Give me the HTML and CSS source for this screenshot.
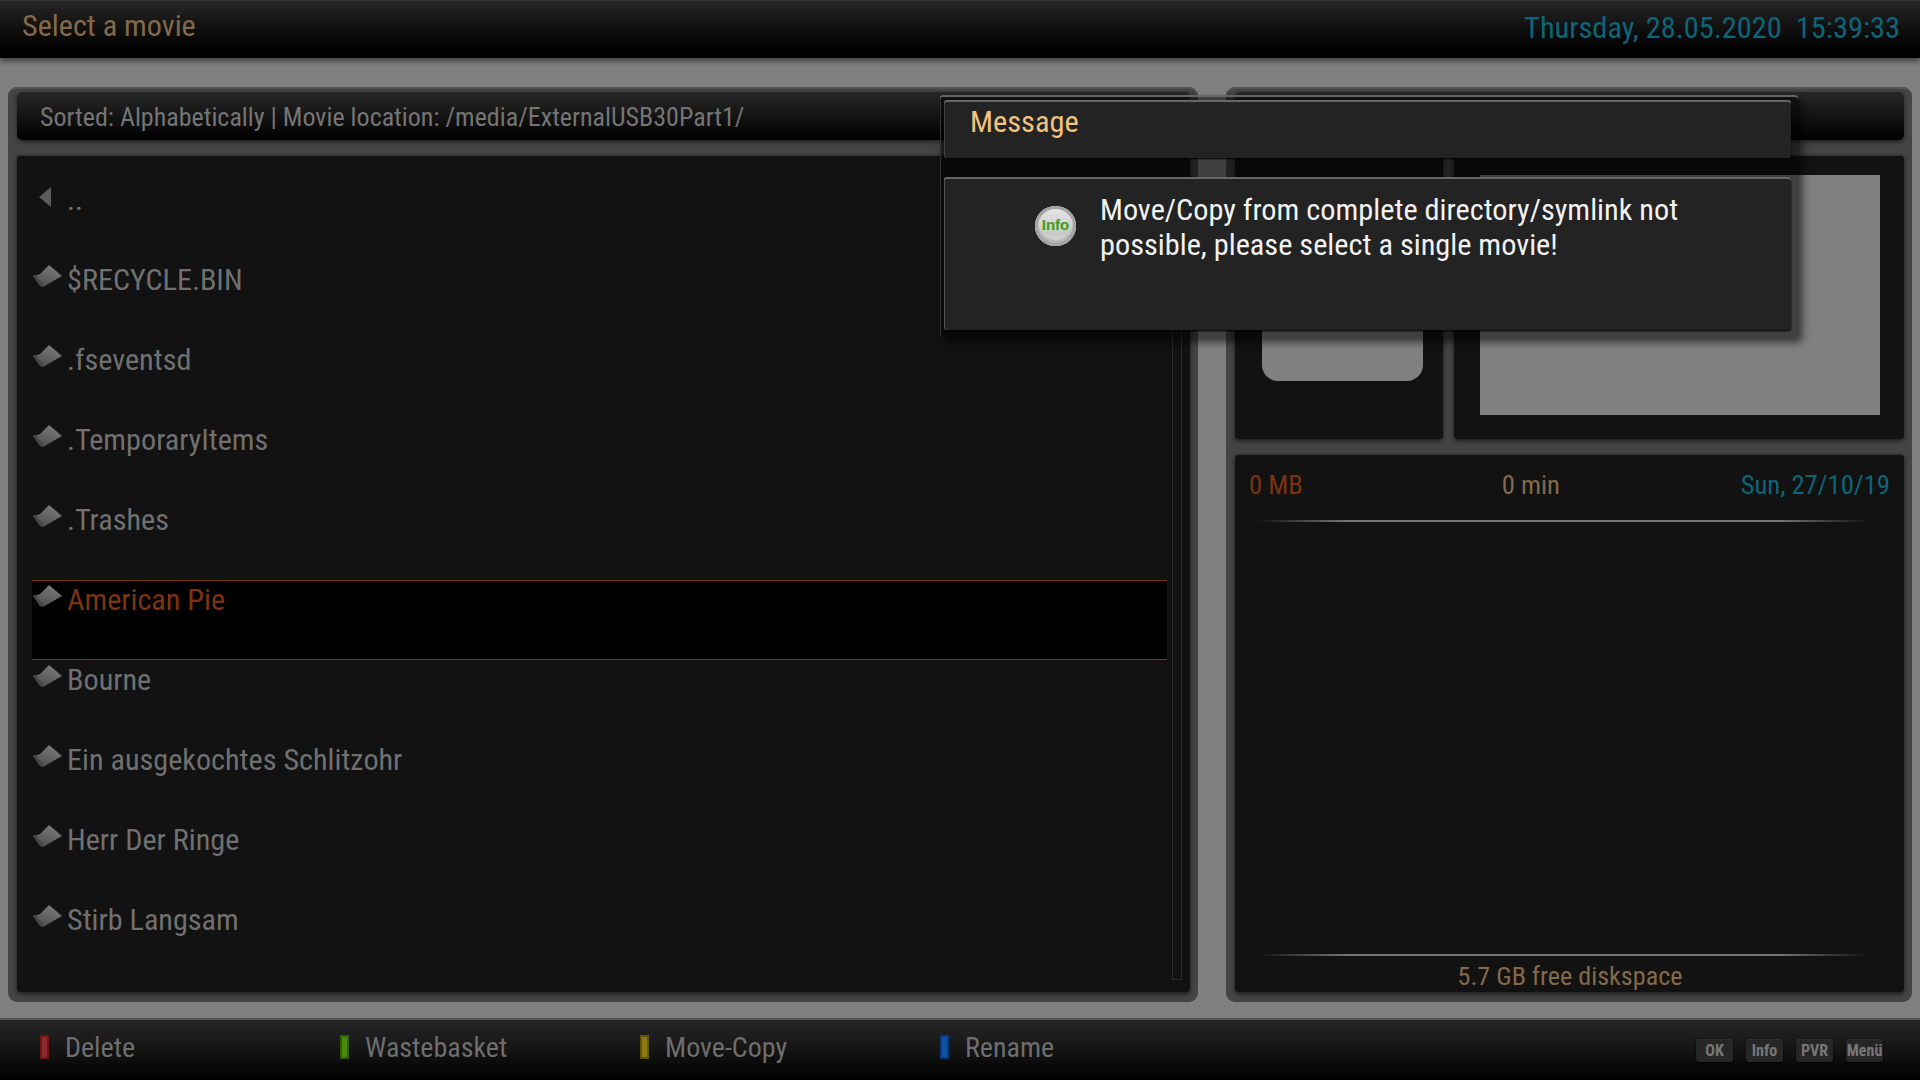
FILE: index.html
```html
<!DOCTYPE html>
<html lang="en">
<head>
<meta charset="utf-8">
<title>Select a movie</title>
<link rel="stylesheet" href="styles.css">
</head>
<body>
<svg class="defs" width="0" height="0" aria-hidden="true">
  <defs>
    <linearGradient id="f" x1="0.8" y1="0" x2="0.3" y2="1"><stop offset="0" stop-color="#7c7c7c"/><stop offset="1" stop-color="#4e4e4e"/></linearGradient>
    <symbol id="folder" viewBox="0 0 32 24">
      <polygon points="1,12 5,11 8,10 17,1 30,12 11,23 8,22" fill="url(#f)"/>
      <polygon points="1,12 11,23 11,20 3,11" fill="#444"/>
    </symbol>
  </defs>
</svg>
<header class="topbar">
  <span class="txt title">Select a movie</span>
  <span class="txt clock">Thursday, 28.05.2020&nbsp;&nbsp;15:39:33</span>
</header>
<main class="stage">
  <section class="frame frame-left">
    <div class="strip"><span class="txt sorted">Sorted: Alphabetically | Movie location: /media/ExternalUSB30Part1/</span></div>
    <div class="card list-card">
      <ul class="list">
        <li class="row"><svg class="ico" viewBox="0 0 32 24"><polygon points="7,13 19,3 19,23" fill="#5c5c5c"/></svg><span class="txt name">..</span></li>
        <li class="row"><svg class="ico"><use href="#folder"/></svg><span class="txt name">$RECYCLE.BIN</span></li>
        <li class="row"><svg class="ico"><use href="#folder"/></svg><span class="txt name">.fseventsd</span></li>
        <li class="row"><svg class="ico"><use href="#folder"/></svg><span class="txt name">.TemporaryItems</span></li>
        <li class="row"><svg class="ico"><use href="#folder"/></svg><span class="txt name">.Trashes</span></li>
        <li class="row row-on"><svg class="ico"><use href="#folder"/></svg><span class="txt name">American Pie</span></li>
        <li class="row"><svg class="ico"><use href="#folder"/></svg><span class="txt name">Bourne</span></li>
        <li class="row"><svg class="ico"><use href="#folder"/></svg><span class="txt name">Ein ausgekochtes Schlitzohr</span></li>
        <li class="row"><svg class="ico"><use href="#folder"/></svg><span class="txt name">Herr Der Ringe</span></li>
        <li class="row"><svg class="ico"><use href="#folder"/></svg><span class="txt name">Stirb Langsam</span></li>
      </ul>
      <div class="scroll"></div>
    </div>
  </section>
  <section class="frame frame-right">
    <div class="strip"></div>
    <div class="media">
      <div class="card poster-card"><div class="poster"></div></div>
      <div class="card fan-card"><div class="fan"></div></div>
    </div>
    <div class="card info-card">
      <div class="meta">
        <span class="txt size">0 MB</span>
        <span class="txt mins">0 min</span>
        <span class="txt date">Sun, 27/10/19</span>
      </div>
      <div class="rule"></div>
      <div class="fill"></div>
      <div class="rule rule-low"></div>
      <div class="free"><span class="txt space">5.7 GB free diskspace</span></div>
    </div>
  </section>
</main>
<footer class="bottombar">
  <div class="keys">
    <div class="key"><i class="swatch red"></i><span class="txt keyname">Delete</span></div>
    <div class="key"><i class="swatch green"></i><span class="txt keyname">Wastebasket</span></div>
    <div class="key"><i class="swatch yellow"></i><span class="txt keyname">Move-Copy</span></div>
    <div class="key"><i class="swatch blue"></i><span class="txt keyname">Rename</span></div>
  </div>
  <div class="btns">
    <span class="txt btn">OK</span><span class="txt btn">Info</span><span class="txt btn">PVR</span><span class="txt btn">Menü</span>
  </div>
</footer>
<aside class="dialog">
  <div class="dlg-title"><span class="txt dlg-head">Message</span></div>
  <div class="dlg-body">
    <div class="badge"><span class="badge-txt">Info</span></div>
    <p class="txt dlg-msg">Move/Copy from complete directory/symlink not<br>possible, please select a single movie!</p>
  </div>
</aside>
</body>
</html>
```
FILE: styles.css
```css
* { box-sizing: border-box; }
html, body { margin: 0; height: 1080px; overflow: hidden; }
body {
  width: 1920px;
  background: #808080;
  display: flex;
  flex-direction: column;
  font-family: Roboto, "Liberation Sans", sans-serif;
  position: relative;
}
.defs { position: absolute; }
.txt { font-family: Roboto, sans-serif; font-stretch: 75%; white-space: nowrap; }

.topbar {
  height: 58px;
  flex: none;
  display: flex;
  justify-content: space-between;
  padding: 9px 20px 0 22px;
  background: linear-gradient(#262626, #161616 35%, #000 85%);
  border-top: 1px solid #333;
  box-shadow: 0 3px 6px rgba(0,0,0,.55);
  position: relative;
}
.title { font-size: 30.2px; line-height: 32px; color: #84694a; }
.clock { font-size: 30.4px; line-height: 36px; color: #0e6478; }

.stage {
  flex: 1;
  display: flex;
  gap: 28px;
  padding: 29px 8px 16px;
  min-height: 0;
}
.frame {
  background: #444;
  border-radius: 9px;
  padding: 5px 8px 10px 9px;
  display: flex;
  flex-direction: column;
  box-shadow: inset 0 2px 1px #555;
}
.frame-left { width: 1190px; }
.frame-right { width: 686px; }
.strip {
  height: 48px;
  flex: none;
  border-radius: 5px;
  background: linear-gradient(#282828, #000);
  box-shadow: 0 2px 4px rgba(0,0,0,.5);
  padding: 12px 23px 0;
}
.sorted { font-size: 26px; line-height: 26px; color: #757575; display: block; }
.card {
  background: #121212;
  border-radius: 4px;
  box-shadow: 0 2px 4px rgba(0,0,0,.6), inset 0 1px 0 #333;
}
.list-card {
  margin-top: 15px;
  flex: 1;
  padding: 25px 8px 12px 15px;
  display: flex;
  gap: 5px;
}
.list { list-style: none; margin: 0; padding: 0; width: 1135px; flex: none; }
.row {
  height: 80px;
  display: flex;
  align-items: flex-start;
  border-top: 1px solid transparent;
  border-bottom: 1px solid transparent;
}
.row-on { background: #000; border-color: #7a3a10; }
.row-on .name { color: #7c3410; }
.ico { width: 32px; height: 24px; flex: none; margin-top: 3px; }
.name { font-size: 30.2px; line-height: 36px; color: #707070; margin: 1px 0 0 3px; }
.scroll { width: 10px; border: 1px solid #2b2b2b; }

.media { display: flex; gap: 11px; height: 284px; margin-top: 15px; flex: none; }
.poster-card { width: 208px; padding: 30px 20px 0 27px; }
.poster { height: 196px; background: #808080; border-radius: 0 0 16px 16px; }
.fan-card { flex: 1; padding: 20px 24px 24px 26px; }
.fan { height: 240px; background: #808080; }

.info-card { margin-top: 15px; flex: 1; display: flex; flex-direction: column; }
.meta {
  display: grid;
  grid-template-columns: 1fr 1fr 1fr;
  padding: 15px 14px 0 14px;
  height: 66px;
  flex: none;
}
.size, .mins, .date { font-size: 26.6px; line-height: 32px; }
.size { color: #7c3410; }
.mins { color: #84694a; text-align: left; padding-left: 39px; }
.date { color: #0e6478; text-align: right; }
.rule {
  height: 2px;
  margin: 0 36px 0 22px;
  flex: none;
  background: linear-gradient(90deg, transparent, #777 15%, #777 85%, transparent);
}
.fill { flex: 1; }
.free { height: 36px; flex: none; text-align: center; padding: 3px 0 0 1px; }
.space { font-size: 26.1px; line-height: 34px; color: #84694a; }

.bottombar {
  height: 62px;
  flex: none;
  display: flex;
  justify-content: space-between;
  background: linear-gradient(#262626, #181818 40%, #000);
  border-top: 2px solid #565656;
  padding: 15px 37px 0 40px;
}
.keys { display: flex; }
.key { width: 300px; display: flex; gap: 16px; align-items: flex-start; }
.swatch { width: 9px; height: 24px; flex: none; border-radius: 1px; display: block; }
.red { background: #8a2a2a; box-shadow: inset 0 0 0 2px #701414; }
.green { background: #4c8a0a; box-shadow: inset 0 0 0 2px #2e6000; }
.yellow { background: #8a7a10; box-shadow: inset 0 0 0 2px #605400; }
.blue { background: #0f50a0; box-shadow: inset 0 0 0 2px #0a3a78; }
.keyname { font-size: 28px; line-height: 26px; color: #6e6e6e; }
.btns { display: flex; gap: 13px; padding-top: 4px; }
.btn {
  width: 37px;
  height: 23px;
  border-radius: 3px;
  background: #262626;
  box-shadow: 0 1px 2px #000, inset 0 1px 0 #303030;
  font-size: 16px;
  line-height: 24px;
  font-weight: 700;
  color: #777;
  text-align: center;
}

.dialog {
  position: absolute;
  left: 940px;
  top: 95px;
  width: 858px;
  height: 242px;
  padding: 5px 7px 0 4px;
  background: rgba(0,0,0,.5);
  border-radius: 3px;
  box-shadow: 4px 5px 8px rgba(0,0,0,.6), inset 0 2px 0 #666, inset 1px 0 0 #333;
}
.dlg-title {
  height: 58px;
  background: #232323;
  border-radius: 3px;
  box-shadow: inset 0 2px 0 #666, inset 1px 0 0 #444, 0 1px 2px #000;
  padding: 4px 0 0 26px;
}
.dlg-head { font-size: 30.4px; line-height: 36px; color: #f2c27e; }
.dlg-body {
  position: relative;
  margin-top: 19px;
  height: 153px;
  background: #232323;
  border-radius: 3px;
  box-shadow: inset 0 2px 0 #666, inset 1px 0 0 #555, 0 1px 2px #000;
  padding: 15px 0 0 156px;
}
.dlg-msg { margin: 0; font-size: 30.3px; line-height: 35px; color: #f2f2f2; }
.badge {
  position: absolute;
  left: 91px;
  top: 29px;
  width: 41px;
  height: 40px;
  border-radius: 50%;
  background: linear-gradient(#e8e8e8, #c8c8c8 70%, #e0e0e0);
  box-shadow: inset 0 0 0 3px #a4a4a4, inset 0 -3px 1px 3px #b8b8b8;
  text-align: center;
}
.badge-txt { font: bold 15px/38px "Liberation Sans", sans-serif; color: #3aa010; }
```
